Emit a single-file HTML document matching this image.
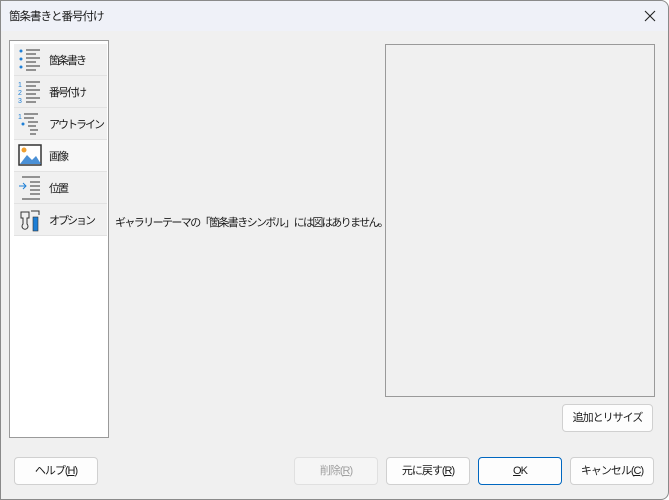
<!DOCTYPE html>
<html><head><meta charset="utf-8"><style>
*{box-sizing:border-box;margin:0;padding:0}
body{width:669px;height:500px;background:#fff;font-family:"Liberation Sans","Noto Sans CJK JP",sans-serif;font-size:12px;color:#1a1a1a;position:relative;overflow:hidden;white-space:nowrap}
.win{position:absolute;left:0;top:0;width:669px;height:500px;background:#f0f0f0;border:1px solid #8a8a8a;border-radius:0 8px 8px 0}
.title{position:absolute;left:0;top:0;width:100%;height:30px;background:#eff1f8;border-radius:0 8px 0 0}
.title span{position:absolute;left:8px;top:7px;font-size:11.5px;letter-spacing:-1px}
.close{position:absolute;right:12px;top:9px}
.list{position:absolute;left:8px;top:39px;width:100px;height:398px;background:#fff;border:1px solid #9a9a9a}
.item{position:absolute;left:4px;width:93px;height:32px;background:#f0f0f0;border-bottom:1px solid #e2e2e2}
.item.sel{background:#f7f7f7}
.item span{position:absolute;left:35px;top:8px;font-size:11px;letter-spacing:-2px}
.item svg{position:absolute;left:4px;top:4px}
.msg{position:absolute;left:114px;top:213px;font-size:11px;letter-spacing:-1.6px}
.prev{position:absolute;left:384px;top:43px;width:270px;height:353px;border:1px solid #9a9a9a;background:#f0f0f0}
.btn{position:absolute;height:28px;background:#fdfdfd;border:1px solid #d0d0d0;border-radius:4px;text-align:center;line-height:26px;font-size:11px;letter-spacing:-1px}
.dis{color:#a0a0a0;background:#f5f5f5;border-color:#e0e0e0}
.ok{border:1px solid #0067c0}
</style></head><body>
<div class="win">
<div class="title"><span>箇条書きと番号付け</span><svg class="close" width="12" height="12"><path d="M1 1l10 10M11 1L1 11" stroke="#222" stroke-width="1.1"/></svg></div>
<div class="list">
<div class="item" style="top:3px"><svg width="26" height="24"><g fill="#1e7fd6"><circle cx="3" cy="3" r="1.5"/><circle cx="3" cy="11" r="1.5"/><circle cx="3" cy="19" r="1.5"/></g><g stroke="#333"><path d="M8 2h14M8 6h10M8 10h14M8 14h10M8 18h14M8 22h10"/></g></svg><span>箇条書き</span></div>
<div class="item" style="top:35px"><svg width="26" height="24"><g fill="#1e7fd6" font-size="7" font-family="Liberation Sans"><text x="0" y="7">1</text><text x="0" y="15">2</text><text x="0" y="23">3</text></g><g stroke="#333"><path d="M8 2h14M8 6h10M8 10h14M8 14h10M8 18h14M8 22h10"/></g></svg><span>番号付け</span></div>
<div class="item" style="top:67px"><svg width="26" height="24"><text x="0" y="7" fill="#1e7fd6" font-size="7">1</text><circle cx="5" cy="12" r="1.5" fill="#1e7fd6"/><g stroke="#333"><path d="M6 2h14M6 6h10M10 10h10M10 14h8M12 18h8M12 22h6"/></g></svg><span>アウトライン</span></div>
<div class="item sel" style="top:99px"><svg width="26" height="24"><rect x="1" y="1" width="22" height="20" fill="#fff" stroke="#333" stroke-width="1.5"/><circle cx="6" cy="6" r="2.5" fill="#f0a030"/><path d="M2 20L9 11l5 5 4-4 5 8z" fill="#4a90d6"/></svg><span>画像</span></div>
<div class="item" style="top:131px"><svg width="26" height="24"><path d="M1 10h7M5 7l3 3-3 3" stroke="#1e7fd6" fill="none"/><g stroke="#333"><path d="M4 1h18M12 6h10M12 10h10M12 14h10M12 18h10M4 23h18"/></g></svg><span>位置</span></div>
<div class="item" style="top:163px"><svg width="26" height="26"><path d="M3 4h8v6H9v6a3 3 0 1 1-4 0V10H3z" fill="none" stroke="#333"/><path d="M13 3h8v4" fill="none" stroke="#333"/><rect x="15" y="9" width="5" height="14" fill="#1e7fd6" stroke="#333" stroke-width=".6"/></svg><span>オプション</span></div>
</div>
<div class="msg">ギャラリーテーマの「箇条書きシンボル」には図はありません。</div>
<div class="prev"></div>
<div class="btn" style="left:561px;top:403px;width:91px">追加とリサイズ</div>
<div class="btn" style="left:13px;top:456px;width:84px">ヘルプ(<u>H</u>)</div>
<div class="btn dis" style="left:293px;top:456px;width:84px">削除(<u>R</u>)</div>
<div class="btn" style="left:385px;top:456px;width:84px">元に戻す(<u>R</u>)</div>
<div class="btn ok" style="left:477px;top:456px;width:84px"><u>O</u>K</div>
<div class="btn" style="left:569px;top:456px;width:84px">キャンセル(<u>C</u>)</div>
</div>
</body></html>
